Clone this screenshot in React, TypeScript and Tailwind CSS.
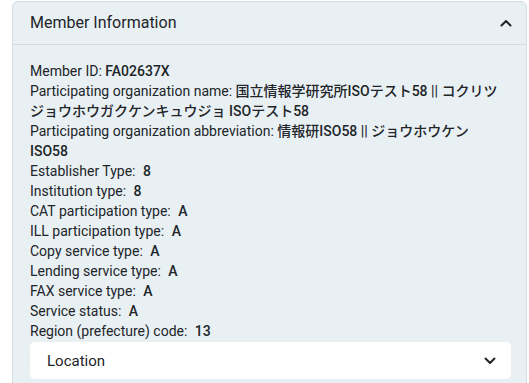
const simple: [string, string][] = [
  ["Establisher Type:", "8"],
  ["Institution type:", "8"],
  ["CAT participation type:", "A"],
  ["ILL participation type:", "A"],
  ["Copy service type:", "A"],
  ["Lending service type:", "A"],
  ["FAX service type:", "A"],
  ["Service status:", "A"],
  ["Region (prefecture) code:", "13"],
]

function Chevron({ up }: { up?: boolean }) {
  return (
    <svg width="12" height="8" viewBox="0 0 12 8" className={up ? "rotate-180" : ""}>
      <path d="M1.5 1.5 L6 6 L10.5 1.5" fill="none" stroke="#212529" strokeWidth="2" strokeLinecap="round" strokeLinejoin="round" />
    </svg>
  )
}

export default function App() {
  return (
    <div className="w-[529px] h-[383px] overflow-hidden bg-white pl-3 pr-[2px] pt-px" style={{ fontFamily: "Roboto, 'Noto Sans CJK JP', sans-serif" }}>
      <div className="border border-[#d5dce1] rounded-t-md bg-[#e9f0f4] text-[#212529]">
        <div className="h-[43px] flex items-center justify-between pl-[17px] pr-[14px] border-b border-[#d5dce1]">
          <span className="text-[16px]">Member Information</span>
          <Chevron up />
        </div>
        <div className="pt-[16px] pl-[17px] pr-[15px] pb-4 text-[14px] leading-[20px]">
          <div className="w-[475px]">
            <div>Member ID: <span className="font-medium">FA02637X</span></div>
            <div>
              Participating organization name: <span className="font-medium">国立情報学研究所ISOテスト58 || コクリツジョウホウガクケンキュウジョ ISOテスト58</span>
            </div>
            <div>
              Participating organization abbreviation: <span className="font-medium">情報研ISO58 || ジョウホウケン ISO58</span>
            </div>
            {simple.map(([k, v]) => (
              <div key={k}>{k} <span className="ml-1 font-medium">{v}</span></div>
            ))}
          </div>
          <div className="mt-[1px] h-[37px] bg-white rounded-[5px] flex items-center justify-between pl-[17px] pr-[15px]">
            <span className="text-[15px]">Location</span>
            <Chevron />
          </div>
        </div>
      </div>
    </div>
  )
}
